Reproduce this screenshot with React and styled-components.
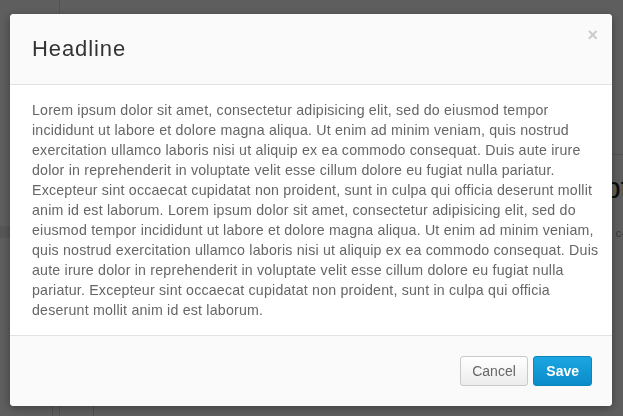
import React from 'react';
import styled, { createGlobalStyle } from 'styled-components';

const GlobalStyle = createGlobalStyle`
  html, body {
    margin: 0;
    padding: 0;
    height: 100%;
    overflow: hidden;
  }
  body {
    font-family: 'Liberation Sans', Arial, sans-serif;
    background: #ffffff;
  }
  #root {
    height: 100%;
  }
`;

// page underneath the modal
const Page = styled.div`
  display: grid;
  grid-template-columns: 60px 1fr;
  height: 100vh;
`;

const Sidebar = styled.div`
  border-right: 1px solid #e2e2e2;
  display: flex;
  flex-direction: column;
`;

const SideItem = styled.div`
  height: 12px;
  margin-top: ${p => p.top || 0}px;
  background: ${p => p.shade ? '#eaeaea' : 'transparent'};
`;

const Content = styled.div`
  display: flex;
  flex-direction: column;
  align-items: flex-end;
  padding-top: 154px;
`;

const Rule = styled.div`
  align-self: stretch;
  border-top: 1px solid #dedede;
`;

const BigTitle = styled.div`
  font-size: 30px;
  color: #222;
  margin-top: 16px;
  margin-right: -6px;
`;

const SmallNote = styled.div`
  font-size: 11px;
  color: #999;
  margin-top: 22px;
  margin-right: -2px;
`;

const FooterTabs = styled.div`
  margin-top: auto;
  align-self: stretch;
  display: flex;
  height: 10px;
  margin-left: -8px;
`;

const Tab = styled.div`
  width: 40px;
  border-left: 1px solid #d8d8d8;
`;

const Overlay = styled.div`
  position: fixed;
  inset: 0;
  background: rgba(0, 0, 0, 0.63);
  display: flex;
  align-items: flex-start;
  justify-content: flex-start;
  padding: 14px 0 0 10px;
`;

const Modal = styled.div`
  width: 602px;
  background: #fff;
  border-radius: 4px;
  box-shadow: 0 2px 10px rgba(0, 0, 0, 0.35);
  overflow: hidden;
  display: flex;
  flex-direction: column;
`;

const Header = styled.div`
  height: 71px;
  box-sizing: border-box;
  background: #fafafa;
  border-bottom: 1px solid #e3e3e3;
  display: flex;
  align-items: center;
  justify-content: space-between;
  padding: 0 14px 0 22px;
`;

const Title = styled.h2`
  margin: 0;
  font-weight: normal;
  font-size: 22px;
  letter-spacing: 0.9px;
  color: #333;
`;

const Close = styled.button`
  align-self: flex-start;
  margin-top: 12px;
  border: none;
  background: none;
  padding: 0;
  font-family: 'Liberation Sans', Arial, sans-serif;
  font-size: 18px;
  font-weight: bold;
  line-height: 1;
  color: #cccccc;
  cursor: pointer;
`;

const Body = styled.p`
  margin: 0;
  padding: 15px 12px 15px 22px;
  font-size: 14.2px;
  letter-spacing: 0.2px;
  line-height: 20px;
  color: #666;
  border-bottom: 1px solid #e3e3e3;
`;

const Line = styled.span`
  display: block;
  white-space: nowrap;
`;

const Footer = styled.div`
  height: 70px;
  box-sizing: border-box;
  background: #fafafa;
  display: flex;
  align-items: center;
  justify-content: flex-end;
  gap: 5px;
  padding: 0 20px;
`;

const Button = styled.button`
  height: 30px;
  padding: 0 ${p => p.primary ? '12px' : '11.5px'};
  border-radius: 3px;
  font-family: 'Liberation Sans', Arial, sans-serif;
  font-size: 14px;
  font-weight: ${p => p.primary ? 'bold' : 'normal'};
  color: ${p => p.primary ? '#fff' : '#666'};
  border: 1px solid ${p => p.primary ? '#0a86bd' : '#c9c9c9'};
  background: ${p => p.primary
    ? 'linear-gradient(#1aa6e1, #0b8cca)'
    : 'linear-gradient(#ffffff, #ececec)'};
  cursor: pointer;
`;

// lorem text, broken where the reference wraps it
const lines = [
  'Lorem ipsum dolor sit amet, consectetur adipisicing elit, sed do eiusmod tempor',
  'incididunt ut labore et dolore magna aliqua. Ut enim ad minim veniam, quis nostrud',
  'exercitation ullamco laboris nisi ut aliquip ex ea commodo consequat. Duis aute irure',
  'dolor in reprehenderit in voluptate velit esse cillum dolore eu fugiat nulla pariatur.',
  'Excepteur sint occaecat cupidatat non proident, sunt in culpa qui officia deserunt mollit',
  'anim id est laborum. Lorem ipsum dolor sit amet, consectetur adipisicing elit, sed do',
  'eiusmod tempor incididunt ut labore et dolore magna aliqua. Ut enim ad minim veniam,',
  'quis nostrud exercitation ullamco laboris nisi ut aliquip ex ea commodo consequat. Duis',
  'aute irure dolor in reprehenderit in voluptate velit esse cillum dolore eu fugiat nulla',
  'pariatur. Excepteur sint occaecat cupidatat non proident, sunt in culpa qui officia',
  'deserunt mollit anim id est laborum.',
];

const App = () => {
  return (
    <>
      <GlobalStyle />
      <Page>
        <Sidebar>
          <SideItem top={226} shade />
        </Sidebar>
        <Content>
          <Rule />
          <BigTitle>pt</BigTitle>
          <SmallNote>c-</SmallNote>
          <FooterTabs>
            <Tab />
            <Tab />
          </FooterTabs>
        </Content>
      </Page>
      <Overlay>
        <Modal>
          <Header>
            <Title>Headline</Title>
            <Close aria-label="Close">×</Close>
          </Header>
          <Body>
            {lines.map((l, i) => <Line key={i}>{l}</Line>)}
          </Body>
          <Footer>
            <Button>Cancel</Button>
            <Button primary>Save</Button>
          </Footer>
        </Modal>
      </Overlay>
    </>
  );
};

export default App;
